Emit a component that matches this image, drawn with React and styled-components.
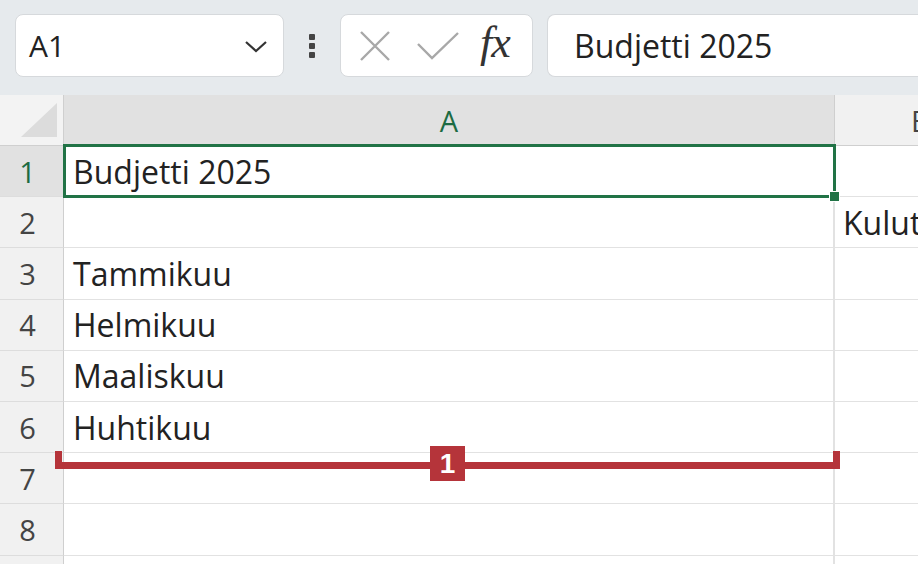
// React
import React from 'react'

// Styled components
import styled, { createGlobalStyle } from 'styled-components'

const rows = [
  { n: 1, a: 'Budjetti 2025', b: '' },
  { n: 2, a: '', b: 'Kulut' },
  { n: 3, a: 'Tammikuu', b: '' },
  { n: 4, a: 'Helmikuu', b: '' },
  { n: 5, a: 'Maaliskuu', b: '' },
  { n: 6, a: 'Huhtikuu', b: '' },
  { n: 7, a: '', b: '' },
  { n: 8, a: '', b: '' },
]

function App () {
  return (
    <>
      <GlobalStyle />
      <Page>
        <Toolbar>
          <NameBox>
            <span>A1</span>
            <svg width="26" height="16" viewBox="0 0 26 16">
              <path d="M3 4 L13 13 L23 4" fill="none" stroke="#333" strokeWidth="2.2" />
            </svg>
          </NameBox>
          <Dots>
            <i /><i /><i />
          </Dots>
          <ButtonsBox>
            <svg width="34" height="34" viewBox="0 0 34 34">
              <path d="M3 3 L31 31 M31 3 L3 31" stroke="#a8a8a8" strokeWidth="2.4" />
            </svg>
            <svg width="44" height="30" viewBox="0 0 44 30">
              <path d="M2 13 L16 27 L42 2" fill="none" stroke="#a8a8a8" strokeWidth="2.4" />
            </svg>
            <Fx>fx</Fx>
          </ButtonsBox>
          <FormulaBox>Budjetti 2025</FormulaBox>
        </Toolbar>

        <SheetArea>
          <Sheet>
            <Corner>
              <svg width="36" height="34" viewBox="0 0 36 34">
                <path d="M36 0 L36 34 L0 34 Z" fill="#dcdcdc" />
              </svg>
            </Corner>
            <ColHeader active>A</ColHeader>
            <ColHeader>B</ColHeader>
            {rows.map(row => (
              <React.Fragment key={row.n}>
                <RowHeader active={row.n === 1}>{row.n}</RowHeader>
                <Cell>{row.a}</Cell>
                <Cell last>{row.b}</Cell>
              </React.Fragment>
            ))}
            <RowHeader />
            <Cell />
            <Cell last />
          </Sheet>

          <Selection>
            <Handle />
          </Selection>

          <Bracket>
            <Badge>1</Badge>
          </Bracket>
        </SheetArea>
      </Page>
    </>
  )
}

export default App

const GlobalStyle = createGlobalStyle`
  html, body {
    margin: 0;
    padding: 0;
    overflow: hidden;
    background: #ffffff;
  }
  body {
    font-family: "Open Sans", "Lato", sans-serif;
    color: #222;
  }
`
const Page = styled.div`
  width: 918px;
  height: 564px;
  display: flex;
  flex-direction: column;
  overflow: hidden;
`
const Toolbar = styled.div`
  height: 95px;
  flex-shrink: 0;
  box-sizing: border-box;
  background: #e6eaed;
  display: flex;
  align-items: flex-start;
  padding: 14px 0 0 15px;
`
const Box = styled.div`
  box-sizing: border-box;
  height: 63px;
  background: #ffffff;
  border: 1px solid #d6d9dc;
  border-radius: 8px;
  display: flex;
  align-items: center;
`
const NameBox = styled(Box)`
  width: 269px;
  padding: 0 14px 0 13px;
  justify-content: space-between;
  font-size: 30px;
  color: #222;
`
const Dots = styled.div`
  width: 56px;
  height: 63px;
  display: flex;
  flex-direction: column;
  align-items: center;
  justify-content: center;
  gap: 3px;

  i {
    width: 6px;
    height: 6px;
    border-radius: 1px;
    background: #444;
  }
`
const ButtonsBox = styled(Box)`
  width: 193px;
  padding: 0 10px 0 17px;
  gap: 24px;
`
const Fx = styled.span`
  font-family: "Liberation Serif", "DejaVu Serif", serif;
  font-style: italic;
  font-size: 44px;
  color: #333;
  margin-left: -4px;
  margin-top: -6px;
  letter-spacing: -1px;
`
const FormulaBox = styled(Box)`
  flex: 1;
  margin-left: 14px;
  border-right: none;
  border-radius: 8px 0 0 8px;
  padding-left: 26px;
  font-size: 32px;
  color: #222;
`
const SheetArea = styled.div`
  position: relative;
  flex: 1;
`
const Sheet = styled.div`
  display: grid;
  grid-template-columns: 64px 771px 1fr;
  grid-template-rows: 51px;
  grid-auto-rows: 51.2px;
`
const Corner = styled.div`
  background: #f3f3f3;
  border-right: 1px solid #cfcfcf;
  border-bottom: 1px solid #cfcfcf;
  display: flex;
  align-items: flex-end;
  justify-content: flex-end;
  padding: 0 6px 8px 0;
`
const ColHeader = styled.div`
  background: ${({ active }) => active ? '#e1e1e1' : '#f1f1f1'};
  color: ${({ active }) => active ? '#1d6b43' : '#444'};
  border-right: 1px solid #cfcfcf;
  border-bottom: 1px solid #cfcfcf;
  font-size: 29px;
  display: flex;
  align-items: center;
  justify-content: ${({ active }) => active ? 'center' : 'flex-start'};
  padding-left: ${({ active }) => active ? '0' : '76px'};
`
const RowHeader = styled.div`
  background: ${({ active }) => active ? '#e1e1e1' : '#f1f1f1'};
  color: ${({ active }) => active ? '#1d6b43' : '#444'};
  border-right: 1px solid #cfcfcf;
  border-bottom: 1px solid #dddddd;
  font-size: 29px;
  display: flex;
  align-items: center;
  justify-content: center;
  padding-right: 8px;
`
const Cell = styled.div`
  border-right: ${({ last }) => last ? 'none' : '2px solid #e2e2e2'};
  border-bottom: 1px solid #e2e2e2;
  font-size: 32px;
  color: #222;
  display: flex;
  align-items: center;
  padding-left: ${({ last }) => last ? '8px' : '9px'};
  white-space: nowrap;
  overflow: hidden;
`
const Selection = styled.div`
  position: absolute;
  left: 63px;
  top: 49px;
  width: 773px;
  height: 54px;
  box-sizing: border-box;
  border: 3px solid #217346;
`
const Handle = styled.div`
  position: absolute;
  right: -7px;
  bottom: -7px;
  width: 9px;
  height: 9px;
  background: #217346;
  border: 1px solid #ffffff;
`
const Bracket = styled.div`
  position: absolute;
  left: 55px;
  top: 356px;
  width: 785px;
  height: 18px;
  box-sizing: border-box;
  border: 7px solid #b5343a;
  border-top: none;
`
const Badge = styled.div`
  position: absolute;
  left: 368px;
  top: -5px;
  width: 35px;
  height: 35px;
  background: #b5343a;
  color: #ffffff;
  font-family: "Liberation Sans", Arial, sans-serif;
  font-weight: 700;
  font-size: 28px;
  display: flex;
  align-items: center;
  justify-content: center;
`
